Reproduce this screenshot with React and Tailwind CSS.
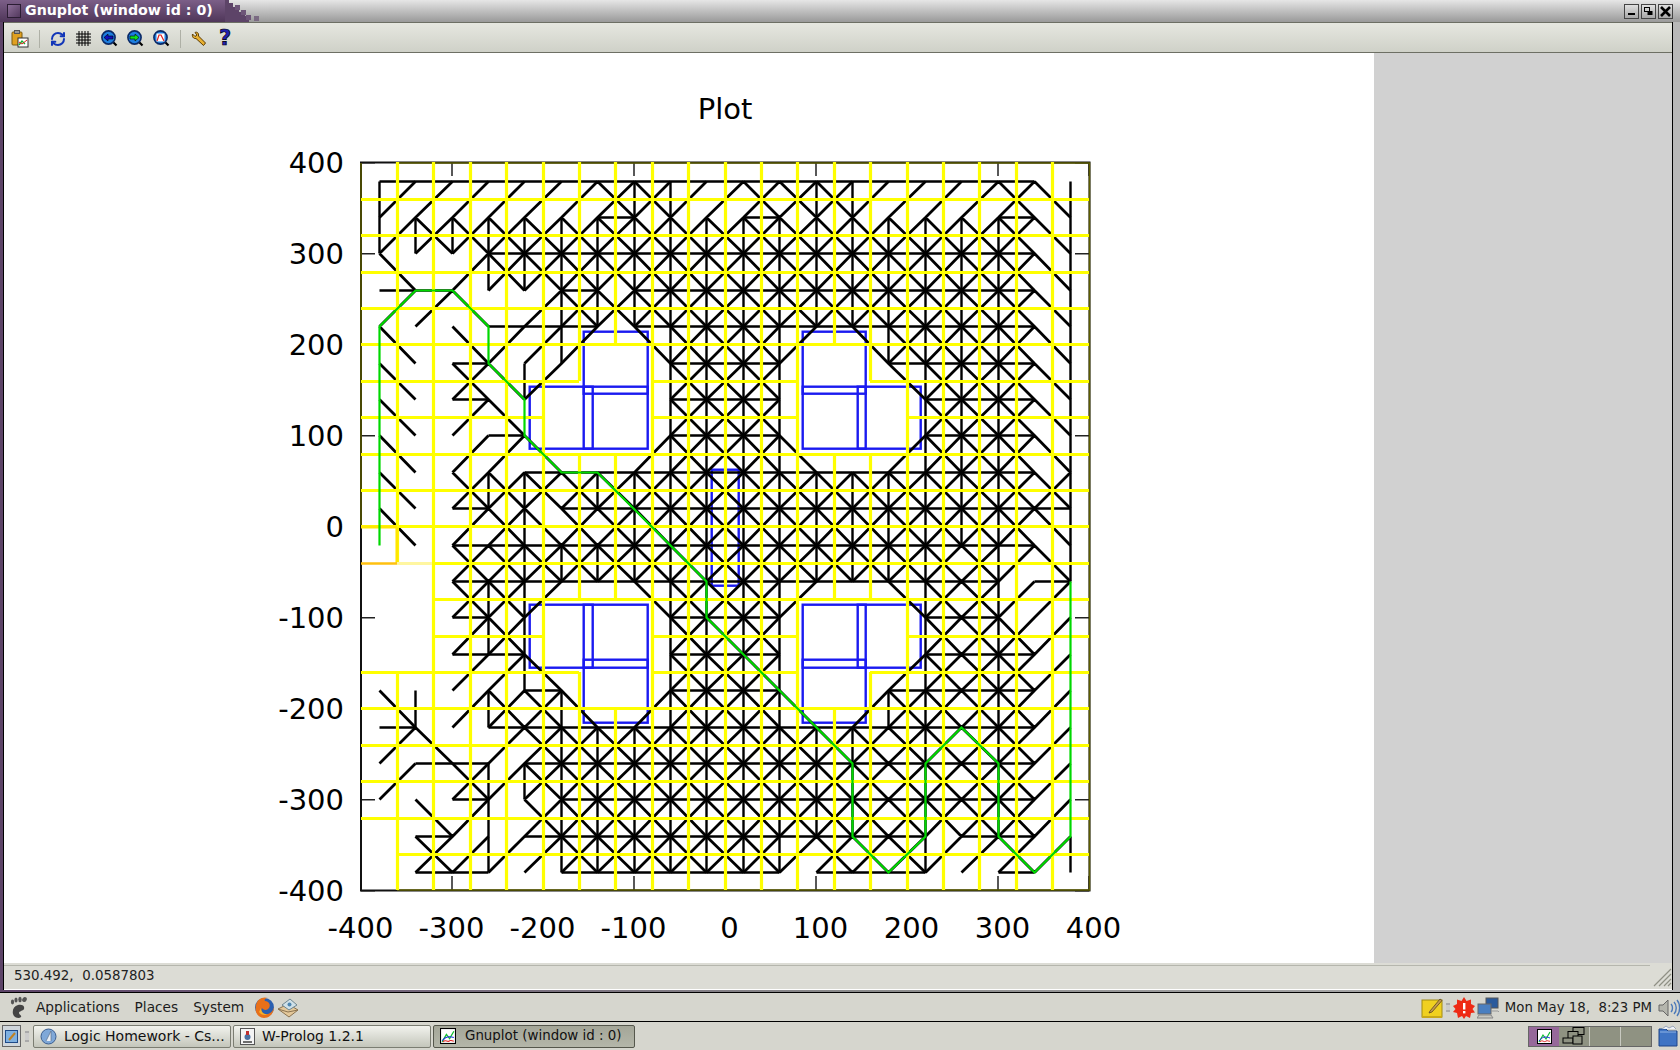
import React from 'react';
import { RefreshCw } from 'lucide-react';

// edge flags per node, one hex digit: 1 = right, 2 = down, 4 = down-right, 8 = down-left from the node to the right
const EDGES = [
  'B99999DFB9DDFB999D42',
  'AEEEEEFEEEFEEEEEEF42',
  '408FFFFFFFFFFFFFFF42',
  '99408FEFFFFFFFFFFF42',
  '40499B05FFFB15FFFF42',
  '40D4A000FFF2005FFF42',
  '40940000FFF2000FFF42',
  '40894008FFF6008FFF42',
  '40CEFDFFFFFFFFFFFFC2',
  '409C6DDFFFFFFFFFFF52',
  '00DDFFFFFFFFFFFFDB42',
  '00DFB115FFFB115FDA90',
  '009E2000FFF2000FDE80',
  '00996000FFF2008FDF80',
  '428ED608FFF608FFDF80',
  '9409DFFFFFFFFFDFDF80',
  '81DAFFFFFFFFFFDFDF80',
  '0492CFFFFFFFFFDFDF80',
  '0D8A9FFFFFFBDDDA9D82',
  '01100111111011100100',
];

const nx = (i) => Math.round(379.7 + 36.4 * i) + 0.5;
const ny = (j) => Math.round(180.5 + 36.4 * j) + 0.5;
const yx = (a) => Math.round(397.9 + 36.4 * a) + 0.5;
const yy = (b) => Math.round(198.7 + 36.4 * b) + 0.5;

const FULL = [[-1, 19]];
const ROOM_A = [[-1, 5], [7, 11], [13, 19]];
const ROOM_B = [[-1, 4], [7, 11], [14, 19]];

const YELLOW_H = [
  FULL, FULL, FULL, FULL, FULL, ROOM_A, ROOM_B, FULL, FULL, FULL,
  [[1, 19]], [[1, 19]], [[1, 4], [7, 11], [14, 19]], ROOM_A,
  FULL, FULL, FULL, FULL, [[0, 19]],
];
const YELLOW_V = [
  [[-1, 10], [13, 19]], FULL, FULL, FULL, FULL,
  [[-1, 5], [7, 11], [13, 19]], [[-1, 4], [7, 11], [14, 19]],
  FULL, FULL, FULL, FULL, FULL,
  [[-1, 4], [7, 11], [14, 19]], [[-1, 5], [7, 11], [13, 19]],
  FULL, FULL, FULL, FULL, FULL,
];

const GREEN = [
  [0, 10], [0, 4], [1, 3], [2, 3], [3, 4], [3, 5], [4, 6], [4, 7], [5, 8], [6, 8], [9, 11], [9, 12],
  [13, 16], [13, 18], [14, 19], [15, 18], [15, 16], [16, 15], [17, 16], [17, 18], [18, 19], [19, 18], [19, 11],
];

// x0, y0, x1, y1
const BLUE = [
  [584, 331, 648, 393], [530, 386, 593, 448], [584, 386, 648, 448],
  [803, 331, 866, 393], [858, 386, 921, 448], [803, 386, 866, 448],
  [584, 659, 648, 722], [530, 604, 593, 667], [584, 604, 648, 667],
  [803, 659, 866, 722], [858, 604, 921, 667], [803, 604, 866, 667],
  [712, 469, 739, 585],
];

const TICKS = [-400, -300, -200, -100, 0, 100, 200, 300, 400];
const px = (v) => 362 + (v + 400) * 0.91;
const py = (v) => 526.8 - v * 0.91;

const blackPaths = () => {
  let straight = '';
  let diagonal = '';
  EDGES.forEach((row, j) => {
    [...row].forEach((c, i) => {
      const f = parseInt(c, 16);
      const x = nx(i), y = ny(j), x2 = nx(i + 1), y2 = ny(j + 1);
      if (f & 1) straight += `M${x} ${y}H${x2}`;
      if (f & 2) straight += `M${x} ${y}V${y2}`;
      if (f & 4) diagonal += `M${x} ${y}L${x2} ${y2}`;
      if (f & 8) diagonal += `M${x2} ${y}L${x} ${y2}`;
    });
  });
  return [straight, diagonal];
};

const yellowPath = () => {
  let d = '';
  YELLOW_H.forEach((segs, b) => segs.forEach(([a0, a1]) => { d += `M${yx(a0) - 0.5} ${yy(b)}H${yx(a1) - 0.5}`; }));
  YELLOW_V.forEach((segs, a) => segs.forEach(([b0, b1]) => { d += `M${yx(a)} ${yy(b0) - 0.5}V${yy(b1) - 0.5}`; }));
  return d;
};

const Plot = () => {
  const [straight, diagonal] = blackPaths();
  return (
    <svg width="1370" height="910" viewBox="5 53 1370 910" className="block font-['DejaVu_Sans',sans-serif]">
      <rect x="5" y="53" width="1370" height="910" fill="#fff" />
      <g transform="translate(0.7 0.7)">
        {BLUE.map(([x0, y0, x1, y1], n) => (
          <rect key={n} x={x0} y={y0} width={x1 - x0} height={y1 - y0} fill="none" stroke="#1a1af0" strokeWidth="2.4" />
        ))}
      </g>
      <path d={straight} fill="none" stroke="#000" strokeWidth="2.4" />
      <path d={diagonal} fill="none" stroke="#000" strokeWidth="2.8" />
      {TICKS.map((v) => (
        <path
          key={v}
          d={`M${px(v)} 162V176M${px(v)} 890V876M362 ${py(v)}H376M1090 ${py(v)}H1076`}
          stroke="#222"
          strokeWidth="1.5"
        />
      ))}
      <rect x="362" y="162.5" width="728.5" height="728" fill="none" stroke="#111" strokeWidth="2" />
      <path d="M398 163H1090.5V890H398M362 163V525" fill="none" stroke="#5c5c00" strokeWidth="1.5" />
      <path d={yellowPath()} fill="none" stroke="#ffff00" strokeWidth="3.2" />
      <path d="M398 527V563" stroke="#ffe600" strokeWidth="3" />
      <path d="M362 527H398" stroke="#ffe800" strokeWidth="3" />
      <path d="M362 563.5H398" stroke="#ffc010" strokeWidth="2.5" />
      <path d="M398 563.5H433" stroke="#fff6a0" strokeWidth="3" />
      <path d={`M${GREEN.map(([i, j]) => `${nx(i)} ${ny(j)}`).join('L')}`} fill="none" stroke="#00d800" strokeWidth="2.2" />
      <text x="726" y="119" textAnchor="middle" fontSize="29" fill="#000">Plot</text>
      {TICKS.map((v) => (
        <text key={v} x="345" y={py(v) + 10.5} textAnchor="end" fontSize="29" fill="#000">{v}</text>
      ))}
      {TICKS.map((v) => (
        <text key={v} x={px(v) + (v < 0 ? -0.5 : 4.5)} y="938" textAnchor="middle" fontSize="29" fill="#000">{v}</text>
      ))}
    </svg>
  );
};

const TitleSteps = () => (
  <svg width="44" height="22" viewBox="0 0 44 22" className="block">
    <defs>
      <linearGradient id="tsg" x1="0" y1="0" x2="0" y2="1">
        <stop offset="0" stopColor="#e6e6e6" />
        <stop offset="1" stopColor="#9a9a9a" />
      </linearGradient>
    </defs>
    <rect width="44" height="22" fill="url(#tsg)" />
    <path d="M0 0H4V3H8V7H14V12H20V16H24V22H0Z" fill="#5d4468" />
    <rect x="10" y="5" width="5" height="5" fill="#6d5578" />
    <rect x="16" y="10" width="5" height="5" fill="#6d5578" />
    <rect x="21" y="15" width="5" height="5" fill="#6d5578" />
    <rect x="29" y="16" width="5" height="5" fill="#7a6a82" />
  </svg>
);

const WinButton = ({ children }) => (
  <div className="w-[15px] h-[15px] border border-[#444] bg-linear-to-b from-[#e0e0e0] to-[#a8a8a8] flex items-center justify-center">
    {children}
  </div>
);

const Magnifier = ({ children, fill = '#1e7fe0' }) => (
  <svg width="17" height="17" viewBox="0 0 17 17" className="block">
    <path d="M11.5 11.5L15.5 15.5" stroke="#000" strokeWidth="2.2" />
    <circle cx="7.5" cy="7.5" r="6.6" fill={fill} stroke="#0b2a66" strokeWidth="1.6" />
    {children}
  </svg>
);

const Toolbar = () => (
  <div className="h-[31px] flex items-center border-y border-y-[#6d6f64] bg-linear-to-b from-[#e6e7e0] to-[#cfd1c8] pl-[7px] pt-[2px]">
    <svg width="18" height="18" viewBox="0 0 18 18" className="block">
      <rect x="1" y="2" width="10" height="13" rx="1" fill="#e0a020" stroke="#7a5a10" />
      <rect x="3.5" y="0.5" width="5" height="3" fill="#999" stroke="#555" />
      <rect x="7" y="8" width="10" height="9" fill="#fff" stroke="#333" />
      <path d="M8 15L11 11L14 14" stroke="#10b030" strokeWidth="1.3" fill="none" />
      <path d="M8 12L11 14L16 10" stroke="#e02020" strokeWidth="1" fill="none" />
    </svg>
    <div className="w-px h-[18px] bg-[#aeb0a6] ml-[10px] mr-[10px]" />
    <RefreshCw size={16} strokeWidth={3} color="#1236b8" />
    <svg width="15" height="15" viewBox="0 0 15 15" className="block ml-[10px]">
      <path d="M3 0V15M6 0V15M9 0V15M12 0V15M0 3H15M0 6H15M0 9H15M0 12H15" stroke="#000" strokeWidth="1" />
    </svg>
    <div className="ml-[10px]">
      <Magnifier>
        <path d="M3 7.5L7 4V6H12V9H7V11Z" fill="#1010c0" stroke="#000" strokeWidth="0.6" />
      </Magnifier>
    </div>
    <div className="ml-[9px]">
      <Magnifier>
        <path d="M12 7.5L8 4V6H3V9H8V11Z" fill="#10e020" stroke="#000" strokeWidth="0.6" />
      </Magnifier>
    </div>
    <div className="ml-[9px]">
      <Magnifier>
        <rect x="3.5" y="3.5" width="8" height="8" fill="#fff" />
        <path d="M4 11L6 5H8L11 11" stroke="#e02020" strokeWidth="1.2" fill="none" />
      </Magnifier>
    </div>
    <div className="w-px h-[18px] bg-[#aeb0a6] ml-[10px] mr-[10px]" />
    <svg width="16" height="16" viewBox="0 0 16 16" className="block">
      <path d="M1.5 3L4 5.5L6 4L4 1.5C6 .5 8 2 7.5 5L14.5 12L12.5 14.5L5 7.5C2.5 8 .8 5.5 1.5 3Z" fill="#e8b030" stroke="#5a3a00" strokeWidth="1" />
    </svg>
    <span className="ml-[11px] w-[14px] text-center text-[21px] leading-none font-bold text-[#2222b0] [-webkit-text-stroke:0.7px_#000]">?</span>
  </div>
);

const TitleBar = () => (
  <div className="h-[22px] flex bg-black">
    <div className="w-[225px] flex items-center bg-linear-to-b from-[#7c5f88] to-[#4f3659]">
      <div className="w-[14px] h-[14px] ml-[7px] border border-[#2b1d33] bg-linear-to-br from-[#8d6f98] to-[#53395e]" />
      <span className="ml-[4px] text-[14.2px] font-bold text-white whitespace-nowrap">Gnuplot (window id : 0)</span>
    </div>
    <TitleSteps />
    <div className="flex-1 flex items-center justify-end gap-[2px] pr-[7px] bg-linear-to-b from-[#e6e6e6] to-[#9a9a9a]">
      <WinButton><div className="w-[7px] h-[2px] mt-[6px] bg-black" /></WinButton>
      <WinButton>
        <svg width="9" height="9" viewBox="0 0 9 9" className="block">
          <rect x="0.5" y="0.5" width="5" height="4" fill="none" stroke="#000" />
          <rect x="3.5" y="4" width="5" height="4" fill="#000" />
        </svg>
      </WinButton>
      <WinButton>
        <svg width="11" height="11" viewBox="0 0 11 11" className="block">
          <path d="M1 1L10 10M10 1L1 10" stroke="#000" strokeWidth="2.6" />
        </svg>
      </WinButton>
    </div>
  </div>
);

const StatusBar = () => (
  <div className="h-[27px] bg-[#dcdcd5] border-b border-b-white pt-[2px] flex">
    <div className="flex-1 h-[22px] border-t border-t-[#b5b6ad] flex items-center pl-[10px] text-[13.4px] text-[#222] whitespace-pre">
      530.492,  0.0587803
    </div>
    <svg width="22" height="22" viewBox="0 0 22 22" className="block">
      <path d="M4 21L21 4M9 21L21 9M14 21L21 14M18 21L21 18" stroke="#8f9085" strokeWidth="1.2" />
    </svg>
  </div>
);

const Foot = () => (
  <svg width="19" height="23" viewBox="0 0 19 23" className="block">
    <path d="M9 9C13 8 16 10 15 13C14 15 10 15 10 17C10 19 13 19 12 21C10 23 5 22 4 18C3 14 5 10 9 9Z" fill="#444" />
    <ellipse cx="3.5" cy="6" rx="1.6" ry="2.4" fill="#555" />
    <ellipse cx="7" cy="4" rx="1.6" ry="2.6" fill="#555" />
    <ellipse cx="11" cy="3.5" rx="1.7" ry="2.8" fill="#555" />
    <ellipse cx="15.5" cy="3.5" rx="2.2" ry="2.6" fill="#555" transform="rotate(30 15.5 3.5)" />
  </svg>
);

const Firefox = () => (
  <svg width="21" height="23" viewBox="0 0 21 23" className="block">
    <circle cx="10.5" cy="11.5" r="9.5" fill="#2a5fb0" />
    <path d="M2 9C3 3 9 0 14 2C11 2 10 4 11 5C15 5 17 9 15 12C13 15 9 14 8 12C6 15 9 19 14 18C17 17 19 15 20 11C20 17 16 22 10 22C5 22 0 17 2 9Z" fill="#e8701a" />
    <path d="M5 16C7 19 11 20 14 18C10 19 7 16 7 12Z" fill="#f4b02a" />
  </svg>
);

const Mail = () => (
  <svg width="22" height="22" viewBox="0 0 22 22" className="block">
    <path d="M1 12L11 7L21 13L12 20Z" fill="#e4c89a" stroke="#8a7350" />
    <path d="M5 8L13 2L20 8L12 13Z" fill="#cfe0e8" stroke="#6d8590" />
    <circle cx="12.5" cy="7.5" r="2" fill="#4f86b0" />
    <path d="M1 12L11 15L21 13" fill="none" stroke="#8a7350" />
  </svg>
);

const Note = () => (
  <svg width="22" height="22" viewBox="0 0 22 22" className="block">
    <rect x="1" y="3" width="20" height="17" fill="#f0d020" stroke="#a08a10" />
    <rect x="1" y="19" width="20" height="2" fill="#c8a818" />
    <path d="M9 14L19 2L21 3.5L11 15L8 16Z" fill="#c49a50" stroke="#5a4420" strokeWidth="0.8" />
  </svg>
);

const Alert = () => (
  <svg width="22" height="22" viewBox="0 0 22 22" className="block">
    <path d="M11 0L13.5 4L18 2.5L18 7L22 9L19.5 12L22 15.5L18 16L17 21L13 19L11 22L9 19L5 21L4 16L0 15L2.5 12L0 9L4 7L4 2.5L8.5 4Z" fill="#ee2a14" />
    <rect x="10" y="6" width="2.4" height="6.5" fill="#fff" />
    <rect x="10" y="14" width="2.4" height="2.4" fill="#fff" />
  </svg>
);

const Network = () => (
  <svg width="22" height="22" viewBox="0 0 22 22" className="block">
    <rect x="9" y="1" width="12" height="10" fill="#2a5a9c" stroke="#555" />
    <rect x="1" y="7" width="13" height="10" fill="#4a7fc0" stroke="#666" />
    <path d="M0 21L2 18H14L16 21Z" fill="#c8c8c0" stroke="#888" />
    <path d="M14 14H21L22 15" fill="none" stroke="#999" />
  </svg>
);

const Speaker = () => (
  <svg width="22" height="22" viewBox="0 0 22 22" className="block">
    <path d="M1 8H5L10 3V19L5 14H1Z" fill="#b4b5ad" stroke="#666" />
    <path d="M13 7C15 9 15 13 13 15M16 5C19 8 19 14 16 17M19 3C22.5 7 22.5 15 19 19" fill="none" stroke="#4a78b8" strokeWidth="1.4" />
  </svg>
);

const PlotThumb = ({ size = 15 }) => (
  <svg width={size} height={size} viewBox="0 0 15 15" className="block">
    <rect x="0.5" y="0.5" width="14" height="14" fill="#fff" stroke="#000" />
    <path d="M2 13L6 6L9 10L13 3" stroke="#10c030" strokeWidth="1.2" fill="none" />
    <path d="M2 12C5 8 8 7 13 9" stroke="#2030e0" strokeWidth="1" fill="none" />
    <path d="M3 13C5 10 7 14 9 12C11 11 12 13 13 12" stroke="#e02020" strokeWidth="1" fill="none" />
  </svg>
);

const TopPanel = () => (
  <div className="h-[28px] flex items-center pt-[1px] bg-[#d6d6ce] text-[13.7px] text-[#1c1c1c]">
    <div className="ml-[9px]"><Foot /></div>
    <span className="ml-[8px]">Applications</span>
    <span className="ml-[15px]">Places</span>
    <span className="ml-[15px]">System</span>
    <div className="ml-[10px]"><Firefox /></div>
    <div className="ml-[2px]"><Mail /></div>
    <div className="flex-1" />
    <Note />
    <div className="w-[4px] h-[9px] mx-[3px] border-y-2 border-[#aaa] bg-[#ccc]" />
    <Alert />
    <div className="ml-[2px]"><Network /></div>
    <span className="ml-[6px] text-[13.3px] whitespace-pre">Mon May 18,  8:23 PM</span>
    <div className="ml-[6px]"><Speaker /></div>
  </div>
);

const TaskButton = ({ icon, label, active }) => (
  <div
    className={
      active
        ? 'w-[202px] h-[23px] flex items-center pl-[6px] gap-[9px] border border-[#55574c] rounded-[2px] bg-linear-to-b from-[#a4a698] to-[#b4b6a9] text-[13.4px] text-[#111] whitespace-nowrap'
        : 'w-[198px] h-[23px] flex items-center pl-[6px] gap-[7px] border border-[#7b7d72] rounded-[2px] bg-linear-to-b from-[#f2f3ee] to-[#c4c6bb] text-[14px] text-[#111] whitespace-nowrap'
    }
  >
    {icon}
    <span>{label}</span>
  </div>
);

const BottomPanel = () => (
  <div className="h-[28px] flex items-center bg-[#d6d6ce]">
    <div className="ml-[2px] w-[19px] h-[22px] border border-[#666] bg-[#cfd6dc] flex items-center justify-center">
      <svg width="13" height="13" viewBox="0 0 13 13" className="block">
        <rect x="0.5" y="0.5" width="12" height="12" fill="#7fb0e0" stroke="#1e4a88" />
        <path d="M4 10L10 3" stroke="#c08020" strokeWidth="2" />
      </svg>
    </div>
    <div className="w-[4px] h-[11px] mx-[4px] border-y-2 border-[#aaa] bg-[#ccc]" />
    <div className="flex gap-[2px]">
      <TaskButton
        label="Logic Homework - Cs..."
        icon={
          <svg width="17" height="17" viewBox="0 0 17 17" className="block">
            <circle cx="8.5" cy="8.5" r="7.5" fill="#7fa8d8" stroke="#3c5f90" />
            <path d="M6 13L11 3L11 13" fill="#e8eef5" stroke="#5a6f88" strokeWidth="0.7" />
          </svg>
        }
      />
      <TaskButton
        label="W-Prolog 1.2.1"
        icon={
          <svg width="15" height="17" viewBox="0 0 15 17" className="block">
            <rect x="0.5" y="0.5" width="14" height="16" fill="#f4f4f4" stroke="#555" />
            <circle cx="7.5" cy="9" r="3" fill="#4a6fa0" />
            <path d="M6 3H9V7H6Z" fill="#c03030" />
            <path d="M3 14H12" stroke="#333" strokeWidth="1.4" />
          </svg>
        }
      />
      <TaskButton label="Gnuplot (window id : 0)" active icon={<PlotThumb size={16} />} />
    </div>
    <div className="flex-1" />
    <div className="w-[124px] h-[21px] flex border border-[#666] bg-[#8f9282]">
      <div className="w-[30px] bg-[#96689a] flex items-center justify-center"><PlotThumb size={15} /></div>
      <div className="w-[31px] border-r border-r-[#c8c9c0] flex items-center justify-center">
        <svg width="24" height="18" viewBox="0 0 24 18" className="block">
          <rect x="11" y="0.5" width="11" height="7" fill="#8f9282" stroke="#000" />
          <rect x="6" y="4.5" width="10" height="7" fill="#8f9282" stroke="#000" />
          <rect x="1" y="11" width="10" height="5" fill="#8f9282" stroke="#000" />
          <rect x="11" y="9" width="9" height="8" fill="#8f9282" stroke="#000" />
        </svg>
      </div>
      <div className="w-[31px] border-r border-r-[#c8c9c0]" />
      <div className="flex-1" />
    </div>
    <svg width="20" height="22" viewBox="0 0 20 22" className="block ml-[6px] mr-[2px]">
      <path d="M1 4H8L10 6H19V21H1Z" fill="#3f74c4" stroke="#1f4588" />
      <path d="M2 7H18" stroke="#8fb4e6" />
      <path d="M4 4L8 1L11 3L15 1L18 4" fill="#eef2f8" stroke="#9aa6b8" />
    </svg>
  </div>
);

export default function App() {
  return (
    <div className="w-[1680px] h-[1050px] overflow-hidden flex flex-col bg-[#d6d6ce] font-['DejaVu_Sans',sans-serif]">
      <div className="h-[993px] flex flex-col bg-linear-to-r from-[#5d4468] via-[#8a8a8a] to-[#b8b8b8]">
        <TitleBar />
        <div className="h-[968px] flex">
          <div className="w-[4px] border-r border-r-black" />
          <div className="w-[1669px] flex flex-col border-r border-r-black">
            <Toolbar />
            <div className="h-[910px] flex bg-[#d1d1d1]">
              <Plot />
            </div>
            <StatusBar />
          </div>
        </div>
        <div className="h-[3px] border-b border-b-black" />
      </div>
      <TopPanel />
      <div className="h-px bg-black" />
      <BottomPanel />
    </div>
  );
}
